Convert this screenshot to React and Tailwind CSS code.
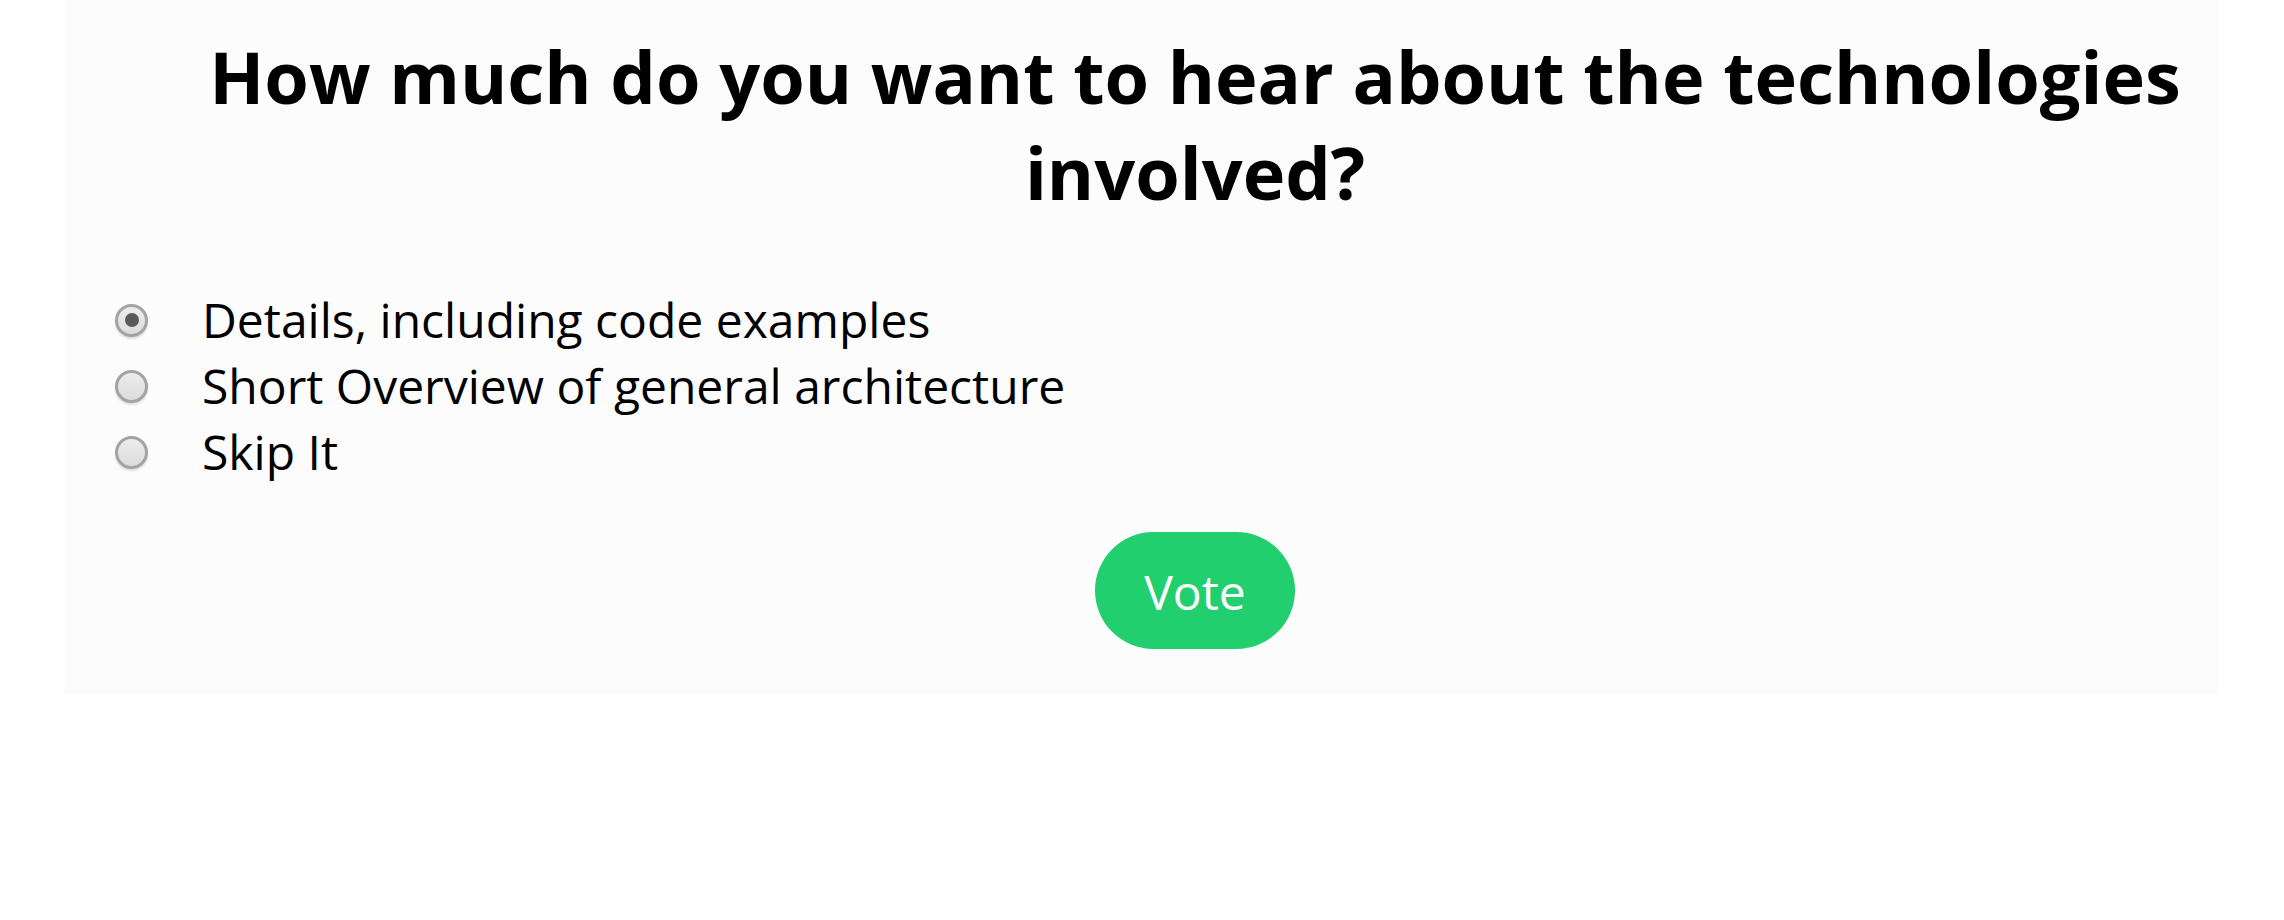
import React, { useState } from 'react';

const options = [
    'Details, including code examples',
    'Short Overview of general architecture',
    'Skip It',
];

const Radio = ({ checked }) => (
    <span className="w-[33px] h-[33px] shrink-0 rounded-full border-[3px] border-[#a3a3a3] bg-gradient-to-b from-[#ececec] to-[#dcdcdc] shadow-[0_2px_2px_rgba(0,0,0,0.12)] flex items-center justify-center">
        {checked && <span className="w-[14px] h-[14px] rounded-full bg-[#5a5a5a]" />}
    </span>
);

export default function App() {
    const [choice, setChoice] = useState(0);

    return (
        <div className="min-h-screen bg-[#fefefe] font-['Open_Sans',sans-serif] text-black">
            <div className="mx-[65px] w-[2153px] bg-[#fcfcfc] pt-[28px] pb-[45px]">
                {/* Question */}
                <h1 className="pl-[107px] text-center text-[72px] leading-[96px] font-bold">
                    How much do you want to hear about the technologies involved?
                </h1>

                {/* Options */}
                <div className="pl-[50px] mt-[67px] flex flex-col">
                    {options.map((label, i) => (
                        <label
                            key={label}
                            onClick={() => setChoice(i)}
                            className="flex items-center gap-[54px] h-[66px] text-[48px] cursor-pointer"
                        >
                            <Radio checked={choice === i} />
                            <span>{label}</span>
                        </label>
                    ))}
                </div>

                {/* Submit */}
                <div className="pl-[107px] mt-[47px] flex justify-center">
                    <button className="w-[200px] h-[117px] pt-[2px] rounded-full bg-[#21cf6f] text-white text-[48px]">
                        Vote
                    </button>
                </div>
            </div>
        </div>
    );
}
